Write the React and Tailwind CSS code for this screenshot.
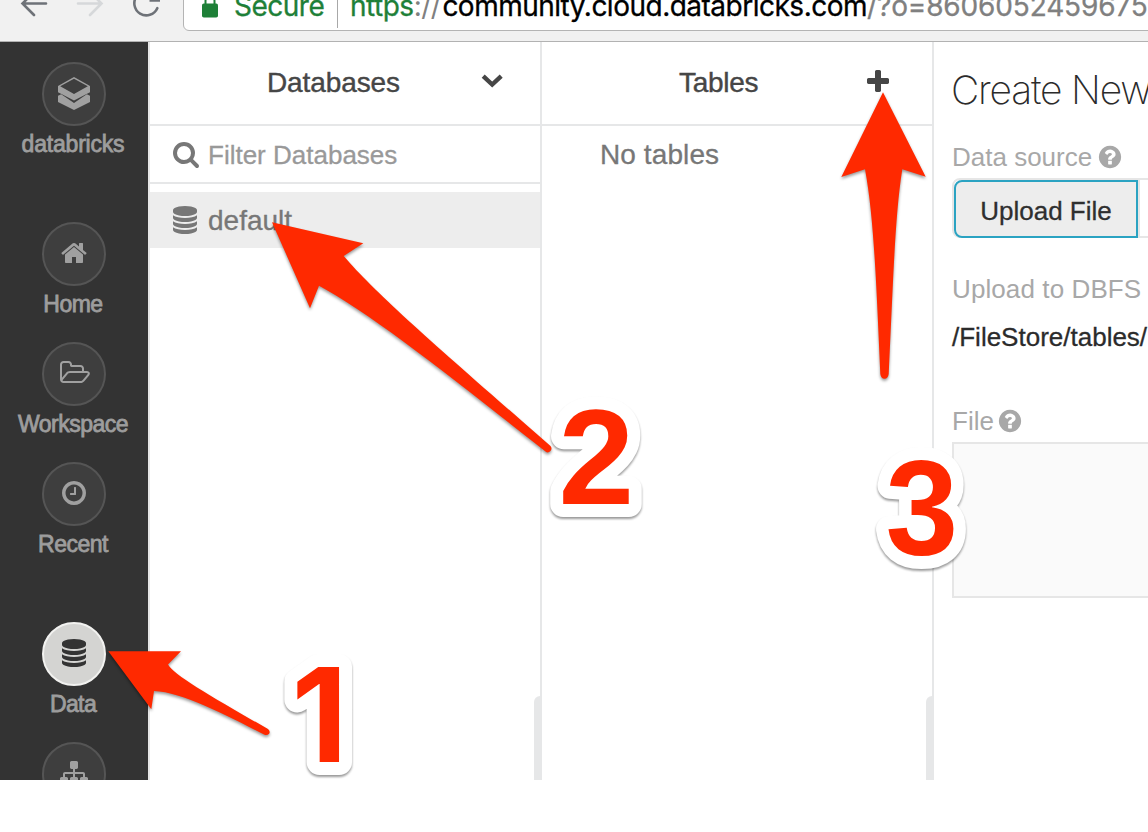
import React from "react";

const ICONS = {
  home: "M1472 992v480q0 26-19 45t-45 19h-384v-384h-256v384h-384q-26 0-45-19t-19-45v-480q0-1 .5-3t.5-3l575-474 575 474q1 2 1 6zm223-69l-62 74q-8 9-21 11h-3q-13 0-21-7l-692-577-692 577q-12 8-24 7-13-2-21-11l-62-74q-8-10-7-23.5t11-21.5l719-599q32-26 76-26t76 26l244 204v-195q0-14 9-23t23-9h192q14 0 23 9t9 23v408l219 182q10 8 11 21.5t-7 23.5z",
  folder:
    "M1717 931q0-35-53-35h-1088q-40 0-85.5 21.5t-71.5 52.5l-294 363q-18 24-18 40 0 35 53 35h1088q40 0 86-22t71-53l294-363q18-22 18-39zm-1141-163h768v-160q0-40-28-68t-68-28h-576q-40 0-68-28t-28-68v-64q0-40-28-68t-68-28h-320q-40 0-68 28t-28 68v853l256-315q44-53 116-87.5t140-34.5zm1269 163q0 62-46 120l-295 363q-43 53-116 87.5t-140 34.5h-1088q-92 0-158-66t-66-158v-960q0-92 66-158t158-66h320q92 0 158 66t66 158v32h544q92 0 158 66t66 158v160h192q54 0 99 24.5t67 70.5q15 32 15 68z",
  clock:
    "M1024 544v448q0 14-9 23t-23 9h-320q-14 0-23-9t-9-23v-64q0-14 9-23t23-9h224v-352q0-14 9-23t23-9h64q14 0 23 9t9 23zm416 352q0-148-73-273t-198-198-273-73-273 73-198 198-73 273 73 273 198 198 273 73 273-73 198-198 73-273zm224 0q0 209-103 385.5t-279.5 279.5-385.5 103-385.5-103-279.5-279.5-103-385.5 103-385.5 279.5-279.5 385.5-103 385.5 103 279.5 279.5 103 385.5z",
  database:
    "M896 768q237 0 443-43t325-127v170q0 69-103 128t-280 93.5-385 34.5-385-34.5-280-93.5-103-128v-170q119 84 325 127t443 43zm0 768q237 0 443-43t325-127v170q0 69-103 128t-280 93.5-385 34.5-385-34.5-280-93.5-103-128v-170q119 84 325 127t443 43zm0-384q237 0 443-43t325-127v170q0 69-103 128t-280 93.5-385 34.5-385-34.5-280-93.5-103-128v-170q119 84 325 127t443 43zm0-1152q208 0 385 34.5t280 93.5 103 128v128q0 69-103 128t-280 93.5-385 34.5-385-34.5-280-93.5-103-128v-128q0-69 103-128t280-93.5 385-34.5z",
  sitemap:
    "M1792 1248v320q0 40-28 68t-68 28h-320q-40 0-68-28t-28-68v-320q0-40 28-68t68-28h96v-192h-512v192h96q40 0 68 28t28 68v320q0 40-28 68t-68 28h-320q-40 0-68-28t-28-68v-320q0-40 28-68t68-28h96v-192h-512v192h96q40 0 68 28t28 68v320q0 40-28 68t-68 28h-320q-40 0-68-28t-28-68v-320q0-40 28-68t68-28h96v-192q0-52 38-90t90-38h512v-192h-96q-40 0-68-28t-28-68v-320q0-40 28-68t68-28h320q40 0 68 28t28 68v320q0 40-28 68t-68 28h-96v192h512q52 0 90 38t38 90v192h96q40 0 68 28t28 68z",
  search:
    "M1216 832q0-185-131.5-316.5t-316.5-131.5-316.5 131.5-131.5 316.5 131.5 316.5 316.5 131.5 316.5-131.5 131.5-316.5zm512 832q0 52-38 90t-90 38q-54 0-90-38l-343-342q-179 124-399 124-143 0-273.5-55.5t-225-150-150-225-55.5-273.5 55.5-273.5 150-225 225-150 273.5-55.5 273.5 55.5 225 150 150 225 55.5 273.5q0 220-124 399l343 343q37 37 37 90z",
  question:
    "M1024 1376v-192q0-14-9-23t-23-9h-192q-14 0-23 9t-9 23v192q0 14 9 23t23 9h192q14 0 23-9t9-23zm256-672q0-88-55.5-163t-138.5-116-170-41q-243 0-371 213-15 24 8 42l132 100q7 6 19 6 16 0 25-12 53-68 86-92 34-24 86-24 48 0 85.5 26t37.5 59q0 38-20 61t-68 45q-63 28-115.5 86.5t-52.5 125.5v36q0 14 9 23t23 9h192q14 0 23-9t9-23q0-19 21.5-49.5t54.5-49.5q32-18 49-28.5t46-35 44.5-48 28-60.5 12.5-81zm384 192q0 209-103 385.5t-279.5 279.5-385.5 103-385.5-103-279.5-279.5-103-385.5 103-385.5 279.5-279.5 385.5-103 385.5 103 279.5 279.5 103 385.5z",
  plus: "M1600 736v192q0 40-28 68t-68 28h-416v416q0 40-28 68t-68 28h-192q-40 0-68-28t-28-68v-416h-416q-40 0-68-28t-28-68v-192q0-40 28-68t68-28h416v-416q0-40 28-68t68-28h192q40 0 68 28t28 68v416h416q40 0 68 28t28 68z",
};

function Icon({ name, className = "size-7" }) {
  return (
    <svg viewBox="0 0 1792 1792" fill="currentColor" className={`shrink-0 overflow-visible ${className}`}>
      <path d={ICONS[name]} />
    </svg>
  );
}

function BricksIcon() {
  return (
    <svg viewBox="0 0 32 34" fill="currentColor" className="mt-0.5 h-[34px] w-8">
      <path fillRule="evenodd" d="M16 0 32 9V15.2L16 23.600 0 15.200V9ZM16 1.700 2.200 9.300 16 17 29.800 9.300Z" />
      <path d="M0 18.800 3.200 17.300 16 25.900 28.800 17.300 32 18.800V25L16 33 0 25Z" />
    </svg>
  );
}

function NavItem({ label, active, tracking = "", children }) {
  return (
    <div className="flex h-[120px] shrink-0 flex-col items-center">
      <div
        className={`flex size-16 shrink-0 items-center justify-center rounded-full border-2 pb-0.5 ${
          active ? "border-[#f2f2f0] bg-[#d4d4d2] text-[#333333]" : "border-[#555555] bg-[#3e3e3e] text-[#a0a0a0]"
        }`}
      >
        {children}
      </div>
      <span
        className={`mt-1.5 pr-0.5 text-[23px] leading-6 whitespace-nowrap text-[#9d9d9d] [-webkit-text-stroke:0.8px_#9d9d9d] ${tracking}`}
      >
        {label}
      </span>
    </div>
  );
}

function BrowserBar() {
  return (
    <div className="flex h-[42px] shrink-0 items-start overflow-hidden border-b border-[#b2b2b2] bg-[#f1f1f1]">
      <svg viewBox="0 0 183 32" className="h-8 w-[183px] shrink-0" fill="none" strokeWidth="2.6" strokeLinecap="round">
        <path d="M46 3.5H22.5M34 -8 22.5 3.5 34 15" stroke="#6e7278" />
        <path d="M78 3.5H101.500M90 -8 101.500 3.5 90 15" stroke="#d6d8da" />
        <path d="M157.300 8.200A12 12 0 1 1 155 -5" stroke="#6e7278" />
        <path d="M149.500 0 160 -10V1.800H149.500Z" fill="#6e7278" stroke="none" />
      </svg>
      <div className="-mt-5 flex h-[51px] w-[1000px] shrink-0 items-center rounded-[6px] border border-[#b4b4b4] bg-white pl-[18px] font-[Inter,sans-serif] text-[28px] tracking-[-0.5px] whitespace-nowrap">
        <svg viewBox="0 0 16 24" className="mt-0.5 h-6 w-4 shrink-0" fill="#1e8038">
          <rect x="0" y="8.500" width="16" height="14" rx="1.800" />
          <path d="M3.500 9V6a4.500 4.500 0 0 1 9 0V9" fill="none" stroke="#1e8038" strokeWidth="2" />
        </svg>
        <span className="ml-4 w-[103px] text-[#1e8038] [-webkit-text-stroke:0.3px_#1e8038]">Secure</span>
        <span className="mt-1 h-10 w-px bg-[#a8a8a8]" />
        <span className="ml-3 text-[#1e8038] [-webkit-text-stroke:0.3px_#1e8038]">https</span>
        <span className="mr-0.5 text-[#808080]">://</span>
        <span className="text-black [-webkit-text-stroke:0.3px_#000000]">community.cloud.databricks.com</span>
        <span className="tracking-[-0.15px] text-[#808080] [-webkit-text-stroke:0.3px_#808080]">/?o=8606052459675</span>
      </div>
    </div>
  );
}

function Annotations() {
  return (
    <svg
      viewBox="0 0 1148 832"
      className="pointer-events-none absolute inset-0 h-[832px] w-[1148px] font-['Liberation_Sans',Arial,sans-serif] font-bold"
      fill="#ff2900"
    >
      <g className="drop-shadow-[0_2px_1.5px_rgba(0,0,0,0.4)]">
        <path d="M108.300 651.200H181L168 664.500C174 675 210 696 268 729Q270.500 731 269.300 733.500 267 736 264 734.500C228 716 182 692 154 691L151.300 709.300Z" />
        <path d="M272 222.300 363.300 243.300 343.700 256C378 296 440 349 550.500 446Q552.500 448.500 550.500 451 548 453.500 545.500 451.500C450 376 370 313 319 285.700L310 308.300Z" />
        <path d="M883 92.300 925.700 176.700 902.300 169.300C895 215 893.500 275 888.700 374Q888 378.700 884.500 378.700 881 378.700 880.300 374C876 275 873.500 215 865 169.300L841.300 177Z" />
      </g>
      <g
        className="drop-shadow-[0_2px_1px_rgba(0,0,0,0.4)]"
        stroke="#ffffff"
        strokeWidth="26"
        strokeLinejoin="round"
        paintOrder="stroke"
        fontSize="136"
      >
        <text x="291.500" y="762" fontSize="130" className="font-[Inter,sans-serif]">1</text>
        <text x="558.500" y="504">2</text>
        <text transform="translate(885.500 553.500) scale(0.96 1)">3</text>
      </g>
    </svg>
  );
}

export default function App() {
  return (
    <div className="relative flex h-[832px] w-[1148px] flex-col overflow-hidden bg-white font-['Liberation_Sans',Arial,sans-serif]">
      <BrowserBar />
      <div className="flex h-[738px] shrink-0 overflow-hidden">
        <nav className="flex w-[150px] shrink-0 flex-col overflow-hidden border-r-2 border-[#e6e6e6] bg-[#333333] pt-5">
          <NavItem label="databricks" tracking="tracking-[-0.2px]"><BricksIcon /></NavItem>
          <div className="h-10 shrink-0" />
          <NavItem label="Home" tracking="tracking-[-0.5px]"><Icon name="home" /></NavItem>
          <NavItem label="Workspace" tracking="tracking-[-0.5px]">
            <Icon name="folder" className="ml-0.5 size-7" />
          </NavItem>
          <NavItem label="Recent" tracking="tracking-[-0.5px]"><Icon name="clock" /></NavItem>
          <div className="h-10 shrink-0" />
          <NavItem label="Data" tracking="tracking-[-0.6px]" active><Icon name="database" /></NavItem>
          <NavItem label=""><Icon name="sitemap" /></NavItem>
        </nav>

        <section className="relative flex w-[392px] shrink-0 flex-col border-r-2 border-[#e6e7e8]">
          <header className="flex h-[84px] shrink-0 items-center border-b-2 border-[#e6e7e8] pl-[117px] text-[28px] text-[#464646] [-webkit-text-stroke:0.4px_#464646]">
            <span className="w-[214px] tracking-[-0.1px]">Databases</span>
            <svg viewBox="0 0 22 14" className="-mt-1 h-3.5 w-[22px] overflow-visible" fill="none" stroke="#464646" strokeWidth="4.400">
              <path d="M2.200 2.200 11.200 10.600 20.200 2.200" />
            </svg>
          </header>
          <div className="flex h-[58px] shrink-0 items-center gap-2 border-b-2 border-[#e6e7e8] pt-[3px] pl-[22px] text-[26px] text-[#999999]">
            <Icon name="search" className="mb-[3px] size-7 text-[#777777]" />
            <span className="[-webkit-text-stroke:0.3px_#999999]">Filter Databases</span>
          </div>
          <div className="mt-2 flex h-14 shrink-0 items-center gap-2 bg-[#ededed] pl-[21px] text-[28px] text-[#777777]">
            <Icon name="database" />
            <span className="mt-0.5 ml-px [-webkit-text-stroke:0.3px_#777777]">default</span>
          </div>
          <div className="absolute -right-0.5 bottom-0 h-[84px] w-2 rounded-tl-[6px] bg-[#e6e7e8]" />
        </section>

        <section className="relative flex w-[392px] shrink-0 flex-col border-r-2 border-[#e6e7e8]">
          <header className="flex h-[84px] shrink-0 items-center border-b-2 border-[#e6e7e8] pl-[137px] text-[28px] text-[#464646]">
            <span className="w-[185px] tracking-[-0.3px] [-webkit-text-stroke:0.4px_#464646]">Tables</span>
            <Icon name="plus" className="-mt-0.5 size-7" />
          </header>
          <p className="mt-3 pl-[58px] text-[28px] leading-[34px] tracking-[0.1px] text-[#777777] [-webkit-text-stroke:0.3px_#777777]">No tables</p>
          <div className="absolute -right-0.5 bottom-0 h-[84px] w-2 rounded-tl-[6px] bg-[#e6e7e8]" />
        </section>

        <main className="flex w-[400px] shrink-0 flex-col pl-[18px] text-[26px] leading-8 whitespace-nowrap text-[#a8a8a8]">
          <h1 className="mt-6 -ml-px h-12 font-[Inter,sans-serif] text-[39px] leading-[48px] font-extralight tracking-[-1.2px] text-[#2b2b2b]">Create New Table</h1>
          <div className="mt-[27px] flex h-8 items-center gap-[5px]">
            Data source <Icon name="question" className="size-[26px]" />
          </div>
          <div className="mt-[5px] flex h-[60px] shrink-0 rounded-lg border-2 border-[#e6e6e6]">
            <button className="h-[58px] w-[184px] rounded-l-lg border-2 border-[#2ba3c2] bg-[#ededed] pt-[3px] text-[#2f2f2f] [-webkit-text-stroke:0.3px_#2f2f2f]">
              Upload File
            </button>
            <div className="h-[56px] w-0.5 bg-[#e6e6e6]" />
          </div>
          <div className="mt-[35px] h-8 tracking-[0.1px]">Upload to DBFS</div>
          <div className="mt-4 h-8 text-[#2b2b2b] [-webkit-text-stroke:0.3px_#2b2b2b]">/FileStore/tables/</div>
          <div className="mt-[52px] flex h-8 items-center gap-[3px]">
            File <Icon name="question" className="size-[26px]" />
          </div>
          <div className="mt-[5px] h-[156px] shrink-0 border-2 border-[#e6e6e6] bg-[#fafafa]" />
        </main>
      </div>
      <Annotations />
    </div>
  );
}
